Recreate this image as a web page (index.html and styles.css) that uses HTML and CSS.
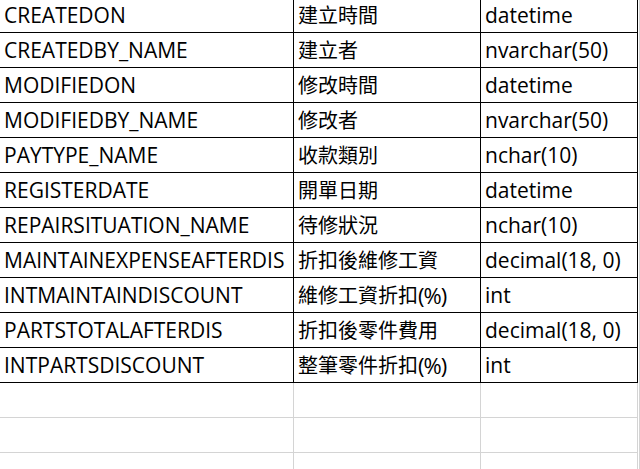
FILE: index.html
```html
<!DOCTYPE html>
<html lang="zh-Hant">
<head>
<meta charset="utf-8">
<link rel="stylesheet" href="styles.css">
</head>
<body>
<div class="sheet">
  <div class="c">CREATEDON</div><div class="c zh">建立時間</div><div class="c">datetime</div><div class="x"></div>
  <div class="c">CREATEDBY_NAME</div><div class="c zh">建立者</div><div class="c">nvarchar(50)</div><div class="x"></div>
  <div class="c">MODIFIEDON</div><div class="c zh">修改時間</div><div class="c">datetime</div><div class="x"></div>
  <div class="c">MODIFIEDBY_NAME</div><div class="c zh">修改者</div><div class="c">nvarchar(50)</div><div class="x"></div>
  <div class="c">PAYTYPE_NAME</div><div class="c zh">收款類別</div><div class="c">nchar(10)</div><div class="x"></div>
  <div class="c">REGISTERDATE</div><div class="c zh">開單日期</div><div class="c">datetime</div><div class="x"></div>
  <div class="c">REPAIRSITUATION_NAME</div><div class="c zh">待修狀況</div><div class="c">nchar(10)</div><div class="x"></div>
  <div class="c">MAINTAINEXPENSEAFTERDIS</div><div class="c zh">折扣後維修工資</div><div class="c">decimal(18, 0)</div><div class="x"></div>
  <div class="c">INTMAINTAINDISCOUNT</div><div class="c zh">維修工資折扣<span class="pct">(%)</span></div><div class="c">int</div><div class="x"></div>
  <div class="c">PARTSTOTALAFTERDIS</div><div class="c zh">折扣後零件費用</div><div class="c">decimal(18, 0)</div><div class="x"></div>
  <div class="c">INTPARTSDISCOUNT</div><div class="c zh">整筆零件折扣<span class="pct">(%)</span></div><div class="c">int</div><div class="x"></div>
  <div class="e"></div><div class="e"></div><div class="e"></div><div class="x"></div>
  <div class="e"></div><div class="e"></div><div class="e"></div><div class="x"></div>
  <div class="e"></div><div class="e"></div><div class="e"></div><div class="x"></div>
</div>
</body>
</html>
```
FILE: styles.css
```css
html, body {
  margin: 0;
  padding: 0;
  background: #ffffff;
  overflow: hidden;
}
.sheet {
  display: grid;
  grid-template-columns: 294px 187px 157px 2px;
  grid-auto-rows: 35px;
  margin-top: -2px;
  font-family: "Open Sans", "Noto Sans CJK TC", sans-serif;
  font-size: 21px;
  color: #000000;
}
.c {
  display: flex;
  align-items: center;
  padding-left: 4px;
  padding-bottom: 1px;
  border-right: 1px solid #000000;
  border-bottom: 1px solid #000000;
  white-space: nowrap;
  overflow: hidden;
}
.zh {
  font-size: 20px;
}
.pct {
  font-size: 22px;
  letter-spacing: -1px;
}
.e {
  border-right: 1px solid #d4d4d4;
  border-bottom: 1px solid #d4d4d4;
}
.x {
  border-right: 1px solid #d4d4d4;
}
```
